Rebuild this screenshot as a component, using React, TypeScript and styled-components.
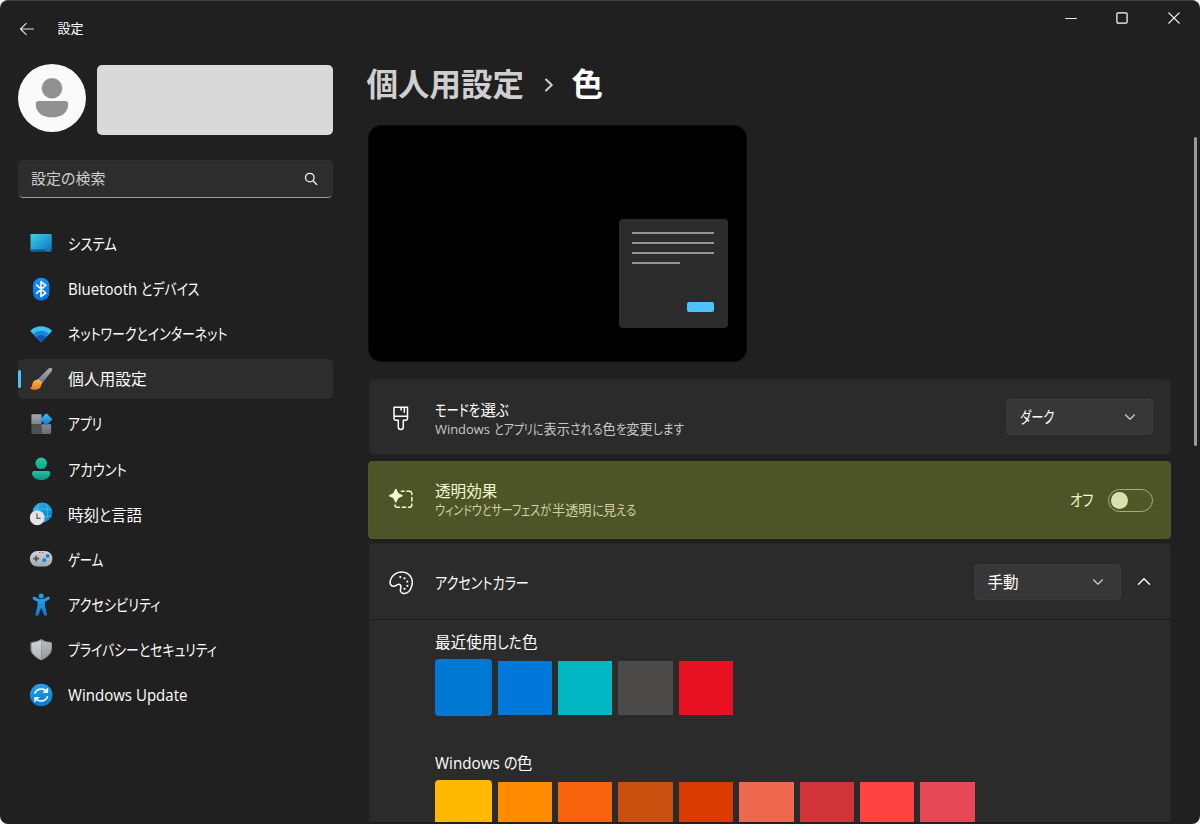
import React from "react";
import styled, { createGlobalStyle } from "styled-components";

const GlobalStyle = createGlobalStyle`
  * { box-sizing: border-box; }
  body {
    margin: 0;
    background: #ffffff;
    color: #ffffff;
    font-family: "Open Sans", "Noto Sans CJK JP", sans-serif;
    font-feature-settings: "palt";
    overflow: hidden;
  }
  svg { display: block; flex: none; }
`;

const Window = styled.div`
  position: relative;
  width: 1200px;
  height: 824px;
  display: flex;
  flex-direction: column;
  background: #202020;
  border-top: 1px solid #434343;
  border-radius: 8px;
  overflow: hidden;
`;

const TitleBar = styled.header`
  height: 56px;
  flex: none;
  display: flex;
  align-items: flex-start;
  justify-content: space-between;
`;

const TitleLeft = styled.div`
  display: flex;
  align-items: center;
  gap: 22.5px;
  padding: 17px 0 0 19px;
`;

const Caption = styled.div`
  display: flex;
  padding: 8px 0.5px 0 0;
`;

const CaptionButton = styled.div`
  width: 51.5px;
  height: 18px;
  display: flex;
  align-items: center;
  justify-content: center;
`;

const Text = styled.span<{ $size?: number; $color?: string; $line?: number }>`
  display: flex;
  white-space: pre;
  font-size: ${(p) => p.$size ?? 15.6}px;
  line-height: ${(p) => p.$line ?? 20}px;
  color: ${(p) => p.$color ?? "#ffffff"};
`;

/* A run of condensed glyphs; $w is the room it takes in the line. */
const Run = styled.span<{ $w: number; $scale: number }>`
  flex: none;
  width: ${(p) => p.$w}px;
  transform: scaleX(${(p) => p.$scale});
  transform-origin: left center;
`;

const Body = styled.div`
  flex: 1;
  min-height: 0;
  display: flex;
`;

const Sidebar = styled.aside`
  width: 333px;
  flex: none;
  padding: 7px 0 0 18px;
`;

const Profile = styled.div`
  display: flex;
  align-items: flex-start;
  gap: 11.3px;
`;

const NamePlate = styled.div`
  width: 236px;
  height: 70.3px;
  margin-top: 1px;
  border-radius: 5px;
  background: #d9d9d9;
`;

const SearchBox = styled.div`
  height: 38px;
  margin-top: 24.7px;
  padding: 0 14px 2px 12px;
  display: flex;
  align-items: center;
  justify-content: space-between;
  background: #2d2d2d;
  border: 1px solid #303030;
  border-bottom: 1px solid #9a9a9a;
  border-radius: 5px;
`;

const Nav = styled.nav`
  display: flex;
  flex-direction: column;
  gap: 5.15px;
  margin-top: 25.4px;
`;

const NavItem = styled.div<{ $active?: boolean }>`
  position: relative;
  height: 40px;
  display: flex;
  align-items: center;
  gap: 15px;
  padding-left: 11px;
  border-radius: 5px;
  background: ${(p) => (p.$active ? "#2d2d2d" : "transparent")};
`;

const NavLabel = styled.div`
  padding-top: 1px;
`;

const ActiveMark = styled.div`
  position: absolute;
  left: 0;
  top: 11px;
  width: 3px;
  height: 18px;
  border-radius: 2px;
  background: #4cc2ff;
`;

const Main = styled.main`
  flex: 1;
  min-width: 0;
  padding: 5px 29px 0 35px;
  display: flex;
  flex-direction: column;
`;

const Crumbs = styled.h1`
  margin: 0 0 0 -1.5px;
  height: 43px;
  display: flex;
  align-items: center;
  font-weight: 700;
`;

const CrumbChevron = styled.div`
  padding: 3px 18px 0 19.5px;
`;

const Preview = styled.div`
  width: 379px;
  height: 237px;
  margin-top: 20px;
  border-radius: 13px;
  border: 1px solid #0c0c0c;
  background: #000000;
  display: flex;
  justify-content: flex-end;
  align-items: flex-end;
  padding: 0 18.4px 33px 0;
`;

const PreviewWindow = styled.div`
  width: 109px;
  height: 109px;
  border-radius: 4px;
  background: #2c2c2c;
  padding: 13px 13.5px 0 13px;
  display: flex;
  flex-direction: column;
  gap: 8px;
`;

const PreviewLine = styled.div<{ $w: number }>`
  width: ${(p) => p.$w}px;
  height: 2px;
  flex: none;
  background: #949494;
`;

const PreviewButton = styled.div`
  width: 27px;
  height: 10px;
  margin: 30px 0 0 auto;
  border-radius: 2px;
  background: #4cc2ff;
`;

const Cards = styled.section`
  display: flex;
  flex-direction: column;
  margin-top: 17px;
  width: 803px;
  flex: 1;
  min-height: 0;
`;

const Card = styled.div<{ $highlight?: boolean }>`
  height: ${(p) => (p.$highlight ? 78 : 76)}px;
  flex: none;
  margin: ${(p) => (p.$highlight ? "6px 0 4px 0" : "0 0 0 1px")};
  padding: 0 17px 0 ${(p) => (p.$highlight ? 20 : 19)}px;
  display: flex;
  align-items: center;
  border-radius: 4px;
  background: ${(p) => (p.$highlight ? "#4d5427" : "#2b2b2b")};
  border: 1px solid ${(p) => (p.$highlight ? "#4f5629" : "#272727")};
`;

const CardHeader = styled(Card)`
  height: 77px;
  border-radius: 4px 4px 0 0;
  border-bottom-color: #1d1d1d;
`;

const CardLabel = styled.div<{ $drop?: number }>`
  flex: 1;
  display: flex;
  align-items: center;
  gap: 22px;
  padding-top: ${(p) => p.$drop ?? 0}px;
`;

const Select = styled.div`
  width: 147.5px;
  height: 36px;
  padding: 0 16px 0 13px;
  display: flex;
  align-items: center;
  justify-content: space-between;
  border-radius: 4px;
  border: 1px solid #3c3c3c;
  background: #373737;
`;

const ExpandIcon = styled.div`
  padding: 0 2.5px 0 15.5px;
`;

const Toggle = styled.div`
  width: 45px;
  height: 23px;
  margin-left: 15px;
  padding-left: 2px;
  display: flex;
  align-items: center;
  border: 1px solid #a5ae78;
  border-radius: 12px;
  background: #505729;
`;

const Knob = styled.div`
  width: 17px;
  height: 17px;
  border-radius: 50%;
  background: #d9e1b1;
`;

const Panel = styled.div`
  flex: 1;
  min-height: 0;
  overflow: hidden;
  margin: 0 0 2px 1px;
  padding: 12px 0 0 65px;
  border: solid #272727;
  border-width: 0 1px;
  background: #2b2b2b;
`;

const SwatchRow = styled.div`
  display: flex;
  align-items: center;
  gap: 6px;
  height: 57px;
  margin: 7px 0 37px;
`;

const Swatch = styled.div<{ $color: string; $first?: boolean }>`
  flex: none;
  width: ${(p) => (p.$first ? 56.6 : 54.4)}px;
  height: ${(p) => (p.$first ? 57 : 54)}px;
  border-radius: ${(p) => (p.$first ? 4 : 0)}px;
  background: ${(p) => p.$color};
`;

const ScrollThumb = styled.div`
  position: absolute;
  right: 3px;
  top: 136px;
  width: 3px;
  height: 309px;
  border-radius: 2px;
  background: #9b9b9b;
`;

const Line = ({ w, h, d, color = "#ffffff", sw = 1.2 }: { w: number; h: number; d: string; color?: string; sw?: number }) => (
  <svg width={w} height={h} viewBox={`0 0 ${w} ${h}`} fill="none" stroke={color} strokeWidth={sw} strokeLinecap="round" strokeLinejoin="round">
    <path d={d} />
  </svg>
);

const Grad = ({ id, a, b, diag }: { id: string; a: string; b: string; diag?: boolean }) => (
  <linearGradient id={id} x1="0" y1="0" x2={diag ? "1" : "0"} y2="1">
    <stop offset="0" stopColor={a} />
    <stop offset="1" stopColor={b} />
  </linearGradient>
);

const NavIcon = ({ children }: { children: React.ReactNode }) => (
  <svg width="24" height="24" viewBox="0 0 24 24">
    {children}
  </svg>
);

const SystemIcon = () => (
  <NavIcon>
    <defs><Grad id="sys" a="#3fd2e6" b="#0873bd" diag /></defs>
    <rect x="1.5" y="3" width="21.3" height="17.6" rx="1.3" fill="url(#sys)" />
    <path d="M1.5 18.6h21.3v.8a1.2 1.2 0 0 1-1.2 1.2H2.7a1.2 1.2 0 0 1-1.2-1.2z" fill="#0a588f" />
    <path d="M17.3 19.6h1M19.3 19.6h1" stroke="#8fd8f2" strokeWidth="0.9" />
  </NavIcon>
);

const BluetoothIcon = () => (
  <NavIcon>
    <defs><Grad id="bt" a="#1591ff" b="#0673ea" /></defs>
    <rect x="4" y="0.7" width="16.4" height="23" rx="8.2" fill="url(#bt)" />
    <path d="M7.7 8.100l9 7.900-4.700 3.700V4.500l4.700 3.800-9 7.800" fill="none" stroke="#fff" strokeWidth="1.6" strokeLinejoin="round" strokeLinecap="round" />
  </NavIcon>
);

const WifiIcon = () => (
  <NavIcon>
    <path d="M12.2 20.2 1.2 8.9C7.1 2.8 17.2 2.8 23.1 8.9z" fill="#3dc3f3" />
    <path d="M12.2 20.2 4.3 12.1c4.3-4.5 11.5-4.5 15.8 0z" fill="#1787db" />
    <path d="M12.2 20.2 7.3 15.2c2.700-2.800 7.100-2.800 9.800 0z" fill="#1059b4" />
  </NavIcon>
);

const BrushIcon = () => (
  <NavIcon>
    <defs>
      <Grad id="hdl" a="#a4abb3" b="#747b83" />
      <Grad id="tip" a="#ffb343" b="#ed7416" />
    </defs>
    <path d="M22.6 1.1c1 .9.7 2.300-.1 3.300l-9.600 12-4.500-3.800L19.600 1.500c1-.9 2.100-1.100 3-.4z" fill="url(#hdl)" />
    <path d="m8.900 12 4.500 3.800-1.300 1.600-4.600-3.800z" fill="#c6c9cb" />
    <path d="M6.300 13.300c3.200-1.100 6.600 1.600 6 4.900-.8 4.500-6.300 5.500-10.600 3.700-.8-.3-.7-.9.100-1.200 2-.9.700-6.100 4.500-7.400z" fill="url(#tip)" />
  </NavIcon>
);

const AppsIcon = () => (
  <NavIcon>
    <defs>
      <Grad id="ap1" a="#a6a9b1" b="#7e8289" />
      <Grad id="ap2" a="#878b93" b="#656970" />
      <Grad id="ap3" a="#47bdf7" b="#0b78d0" diag />
    </defs>
    <path d="M3.500 2.200h9v10H2.400V3.300a1.100 1.100 0 0 1 1.100-1.100z" fill="url(#ap1)" />
    <path d="M2.400 12.200h10.100v9.900h-9a1.100 1.100 0 0 1-1.100-1.100z" fill="#4c4f54" />
    <path d="M12.500 12.200h9.600V21a1.100 1.100 0 0 1-1.100 1.100h-8.500z" fill="url(#ap2)" />
    <rect x="12.900" y="2.900" width="8.800" height="8.800" rx="1.200" transform="rotate(45 17.300 7.300)" fill="url(#ap3)" />
  </NavIcon>
);

const AccountIcon = () => (
  <NavIcon>
    <defs>
      <Grad id="ac1" a="#24c5a7" b="#12a98f" />
      <Grad id="ac2" a="#26c4a5" b="#08917f" />
    </defs>
    <circle cx="12.200" cy="6.300" r="5.800" fill="url(#ac1)" />
    <path d="M5 14.100h14.400a1.900 1.900 0 0 1 1.900 1.900c0 4-3.500 7.100-9.100 7.100S3.100 20 3.100 16A1.900 1.900 0 0 1 5 14.100z" fill="url(#ac2)" />
  </NavIcon>
);

const TimeIcon = () => (
  <NavIcon>
    <defs><Grad id="gl" a="#29b5e3" b="#0878cc" diag /></defs>
    <circle cx="13.400" cy="10.500" r="9.900" fill="url(#gl)" />
    <path d="M4.600 7.200h18M5 14.300h18M10 1.200C7.500 6.500 8 15 12 20M16.500 1c3.500 5.500 3 13-1 19" stroke="#66d5f0" strokeWidth="0.900" fill="none" opacity="0.600" />
    <circle cx="8.200" cy="15.800" r="7.400" fill="#e4e5e7" />
    <path d="M8 11.600v4.800h3.600" stroke="#55585c" strokeWidth="1.200" fill="none" />
  </NavIcon>
);

const GameIcon = () => (
  <NavIcon>
    <defs><Grad id="gm" a="#d0d3d8" b="#a3a8b0" /></defs>
    <rect x="0.900" y="4" width="22.500" height="15.500" rx="7.500" fill="url(#gm)" />
    <path d="M4.300 11.600h5.800M7.200 8.700v5.800" stroke="#4b4f55" strokeWidth="1.600" />
    <path d="M10 5.600h1.500M13 5.600h1.500" stroke="#6d7177" strokeWidth="1" />
    <circle cx="18.600" cy="9" r="2" fill="#1284dc" />
    <circle cx="15.300" cy="13.300" r="2" fill="#1284dc" />
  </NavIcon>
);

const AccessIcon = () => (
  <NavIcon>
    <defs><Grad id="acc" a="#27a4ef" b="#0a77d0" /></defs>
    <circle cx="12.200" cy="3" r="2.500" fill="#1f9bea" />
    <path d="M4 4.200c.6-.8 1.400-.6 2-.2 1.600 1.200 3.700 2.300 6.200 2.300s4.600-1.100 6.200-2.300c.6-.4 1.400-.6 2 .2.600.9.300 1.700-.4 2.200-1.300.9-2.700 1.700-4.100 2.200v4.200l2 8c.3 1.100-.3 1.800-1 2-.9.200-1.700-.2-2-1.100l-2.700-7-2.700 7c-.3.900-1.100 1.300-2 1.100-.7-.2-1.300-.9-1-2l2-8V8.600C7.100 8.100 5.700 7.300 4.400 6.400c-.7-.5-1-1.300-.4-2.200z" fill="url(#acc)" />
  </NavIcon>
);

const ShieldIcon = () => (
  <NavIcon>
    <defs>
      <Grad id="sh1" a="#d2d4d6" b="#b2b4b8" />
      <Grad id="sh2" a="#b9bbbf" b="#97999e" />
    </defs>
    <path d="M12.200 1.800c2.600 1.800 5.600 2.600 9.400 2.900.3 0 .5.200.5.500v5.700c0 4.400-4 8-9.900 10.700z" fill="url(#sh2)" />
    <path d="M12.200 1.800C9.600 3.600 6.600 4.400 2.800 4.700c-.3 0-.5.200-.5.500v5.700c0 4.400 4 8 9.900 10.700z" fill="url(#sh1)" />
    <path d="M12.200 1.500c2.600 1.900 5.800 2.700 9.700 3 .3 0 .5.200.5.500v6c0 4.500-4.200 8.200-10.200 10.900C6.200 19.200 2 15.500 2 11V5c0-.3.200-.5.500-.5 3.900-.3 7.100-1.100 9.700-3z" fill="none" stroke="#9fa2a6" strokeWidth="1" />
  </NavIcon>
);

const UpdateIcon = () => (
  <NavIcon>
    <defs><Grad id="up" a="#22a3ea" b="#0c79d0" /></defs>
    <circle cx="12.200" cy="12" r="11.300" fill="url(#up)" />
    <g fill="none" stroke="#fff" strokeWidth="1.600" strokeLinecap="round" strokeLinejoin="round">
      <path d="M6 10.300c1.700-5 8.800-5.800 11.900-1.400M18.300 5.800v3.500h-3.600" />
      <path d="M18.400 13.700c-1.700 5-8.800 5.800-11.900 1.400M6.100 18.200v-3.500h3.600" />
    </g>
  </NavIcon>
);

const ModeIcon = () => (
  <svg width="24" height="28" viewBox="0 0 24 28" fill="none" stroke="#fff" strokeWidth="1.500" strokeLinejoin="round" strokeLinecap="round">
    <path d="M5 2.300h13.500v11.200a1.700 1.700 0 0 1-1.700 1.700h-2.500v6.700a2.500 2.500 0 0 1-5 0v-6.700H6.700A1.700 1.700 0 0 1 5 13.500zM5 11.200h13.500M15.300 2.300v5M12.100 2.300v2.700" />
  </svg>
);

const TransparencyIcon = () => (
  <svg width="24" height="24" viewBox="0 0 24 24">
    <path d="M6.800 1.300 8.900 5.600 13.200 7.700 8.900 9.800 6.800 14.100 4.700 9.800.4 7.700 4.700 5.600z" fill="#f4f9cd" stroke="#f4f9cd" strokeWidth="1.200" strokeLinejoin="round" />
    <path d="M12.400 3.200h2.800M18 3.200h2.500a2.300 2.300 0 0 1 2.300 2.300v1M22.800 9.500v3.500M22.800 16v1a2.300 2.300 0 0 1-2.300 2.300h-1M16.700 19.300h-3.500M10.400 19.300H8.200A2.300 2.300 0 0 1 6 17" fill="none" stroke="#f4f9cd" strokeWidth="1.500" strokeLinecap="round" />
  </svg>
);

const PaletteIcon = () => (
  <svg width="24" height="24" viewBox="0 0 24 24">
    <path d="M1.300 9.700C2.900 3.400 9.400-.3 15.700 1.400c6 1.700 8.800 7.500 7.100 13.400-1.300 4.800-4.600 8.300-8.500 7.700-3.200-.5-3.200-3.300-2.500-5.700.7-2.600-1.200-4.100-3.200-3.100-1.200.6-2.400 1.800-4.200 1.600-2.900-.3-3.800-3.100-3.100-5.600z" fill="none" stroke="#fff" strokeWidth="1.500" />
    <g fill="#fff">
      <circle cx="11.300" cy="6.100" r="1.100" />
      <circle cx="15.500" cy="7.300" r="1.100" />
      <circle cx="18.300" cy="10.600" r="1.100" />
      <circle cx="18.400" cy="14.800" r="1.100" />
      <circle cx="15.500" cy="17.800" r="1.100" />
    </g>
  </svg>
);

const Avatar = () => (
  <svg width="68" height="68" viewBox="0 0 68 68">
    <circle cx="34" cy="34" r="34" fill="#fafafa" />
    <circle cx="34" cy="24.300" r="10.300" fill="#919191" />
    <path d="M21 37h26a3.200 3.200 0 0 1 3.200 3.200C50.200 48.500 43.500 53.300 34 53.300S17.800 48.500 17.800 40.200A3.200 3.200 0 0 1 21 37z" fill="#919191" />
  </svg>
);

type Part = string | [text: string, width: number, scale: number];

const Parts = ({ parts }: { parts: Part[] }) => (
  <>
    {parts.map((p, i) =>
      typeof p === "string" ? (
        <span key={i}>{p}</span>
      ) : (
        <Run key={i} $w={p[1]} $scale={p[2]}>{p[0]}</Run>
      )
    )}
  </>
);

const NAV: { parts: Part[]; icon: React.ReactNode; active?: boolean }[] = [
  { parts: [["システム", 49, 0.86]], icon: <SystemIcon /> },
  { parts: [["Bluetooth ", 73, 0.965], ["とデバイス", 58, 0.83]], icon: <BluetoothIcon /> },
  { parts: [["ネットワークとインターネット", 160, 0.83]], icon: <WifiIcon /> },
  { parts: [["個人用設定", 80, 1.01]], icon: <BrushIcon />, active: true },
  { parts: [["アプリ", 35, 0.82]], icon: <AppsIcon /> },
  { parts: [["アカウント", 58, 0.855]], icon: <AccountIcon /> },
  { parts: ["時刻", ["と", 11.8, 0.88], "言語"], icon: <TimeIcon /> },
  { parts: [["ゲーム", 36, 0.79]], icon: <GameIcon /> },
  { parts: [["アクセシビリティ", 92, 0.845]], icon: <AccessIcon /> },
  { parts: [["プライバシーとセキュリティ", 149, 0.825]], icon: <ShieldIcon /> },
  { parts: [["Windows Update", 120, 0.965]], icon: <UpdateIcon /> },
];

const RECENT = ["#0078d4", "#0078da", "#00b7c3", "#4c4a48", "#e81123"];
const WINDOWS = ["#ffb900", "#ff8c00", "#f7630c", "#ca5010", "#da3b01", "#ef6950", "#d13438", "#ff4343", "#e74856"];

const Swatches = ({ colors }: { colors: string[] }) => (
  <SwatchRow>
    {colors.map((c, i) => (
      <Swatch key={c} $color={c} $first={i === 0} />
    ))}
  </SwatchRow>
);

export default function App() {
  return (
    <>
      <GlobalStyle />
      <Window>
        <TitleBar>
          <TitleLeft>
            <Line w={16} h={16} d="M14.500 9H1.500M7.200 3.300 1.500 9l5.700 5.700" color="#e4e4e4" sw={1.100} />
            <Text $size={13}>設定</Text>
          </TitleLeft>
          <Caption>
            <CaptionButton><Line w={12} h={12} d="M.6 6.500h10.800" color="#e8e8e8" sw={1.100} /></CaptionButton>
            <CaptionButton>
              <Line w={12} h={12} d="M2 .9h8a1.100 1.100 0 0 1 1.100 1.100v8a1.100 1.100 0 0 1-1.100 1.100H2A1.100 1.100 0 0 1 .9 10V2A1.100 1.100 0 0 1 2 .9z" />
            </CaptionButton>
            <CaptionButton><Line w={12} h={12} d="M.8.8l10.400 10.400M11.200.8.8 11.200" /></CaptionButton>
          </Caption>
        </TitleBar>
        <Body>
          <Sidebar>
            <Profile>
              <Avatar />
              <NamePlate />
            </Profile>
            <SearchBox>
              <Text $size={15} $color="#cdcdcd">設定の検索</Text>
              <Line w={14} h={14} d="M5.800 2.300a4.300 4.300 0 1 0 0 8.600 4.300 4.300 0 0 0 0-8.600zM9 9.800l3.700 3.700" color="#f0f0f0" sw={1.300} />
            </SearchBox>
            <Nav>
              {NAV.map((n, i) => (
                <NavItem key={i} $active={n.active}>
                  {n.active && <ActiveMark />}
                  {n.icon}
                  <NavLabel>
                    <Text><Parts parts={n.parts} /></Text>
                  </NavLabel>
                </NavItem>
              ))}
            </Nav>
          </Sidebar>
          <Main>
            <Crumbs>
              <Text $size={31.5} $line={43} $color="#cfcfcf">個人用設定</Text>
              <CrumbChevron>
                <Line w={10} h={14} d="M2 1.500 7.800 7 2 12.500" color="#cfcfcf" sw={2} />
              </CrumbChevron>
              <Text $size={31.5} $line={43}>色</Text>
            </Crumbs>
            <Preview>
              <PreviewWindow>
                <PreviewLine $w={82} />
                <PreviewLine $w={82} />
                <PreviewLine $w={82} />
                <PreviewLine $w={48} />
                <PreviewButton />
              </PreviewWindow>
            </Preview>
            <Cards>
              <Card>
                <CardLabel $drop={3}>
                  <ModeIcon />
                  <div>
                    <Text>
                      <Parts parts={[["モードを", 45.5, 0.79], "選", ["ぶ", 13, 0.85]]} />
                    </Text>
                    <Text $size={13.2} $line={18} $color="#c8c8c8">
                      <Parts
                        parts={[
                          ["Windows ", 59, 0.98],
                          ["とアプリに", 49.5, 0.83],
                          "表示",
                          ["される", 32.5, 0.89],
                          "色",
                          ["を", 10.8, 0.9],
                          "変更",
                          ["します", 31, 0.88],
                        ]}
                      />
                    </Text>
                  </div>
                </CardLabel>
                <Select>
                  <Text><Parts parts={[["ダーク", 36, 0.79]]} /></Text>
                  <Line w={12} h={8} d="M1.500 1.800 6 6.200l4.500-4.400" color="#cfcfcf" sw={1.200} />
                </Select>
              </Card>
              <Card $highlight>
                <CardLabel>
                  <TransparencyIcon />
                  <div>
                    <Text $color="#f4f9cd">透明効果</Text>
                    <Text $size={13.2} $line={18} $color="#cdd4a3">
                      <Parts
                        parts={[
                          ["ウィンドウとサーフェスが", 117, 0.835],
                          "半透明",
                          ["に", 11.5, 0.92],
                          "見",
                          ["える", 21, 0.87],
                        ]}
                      />
                    </Text>
                  </div>
                </CardLabel>
                <Text $color="#f4f9cd"><Parts parts={[["オフ", 23.5, 0.86]]} /></Text>
                <Toggle><Knob /></Toggle>
              </Card>
              <CardHeader>
                <CardLabel $drop={3}>
                  <PaletteIcon />
                  <Text><Parts parts={[["アクセントカラー", 94, 0.84]]} /></Text>
                </CardLabel>
                <Select>
                  <Text>手動</Text>
                  <Line w={12} h={8} d="M1.500 1.800 6 6.200l4.500-4.400" color="#cfcfcf" sw={1.200} />
                </Select>
                <ExpandIcon>
                  <Line w={14} h={9} d="M1.500 7.200 7 1.700l5.500 5.500" sw={1.400} />
                </ExpandIcon>
              </CardHeader>
              <Panel>
                <Text><Parts parts={["最近使用", ["した", 24.5, 0.88], "色"]} /></Text>
                <Swatches colors={RECENT} />
                <Text><Parts parts={[["Windows ", 69, 0.975], ["の", 12.8, 0.9], "色"]} /></Text>
                <Swatches colors={WINDOWS} />
              </Panel>
            </Cards>
          </Main>
        </Body>
        <ScrollThumb />
      </Window>
    </>
  );
}
